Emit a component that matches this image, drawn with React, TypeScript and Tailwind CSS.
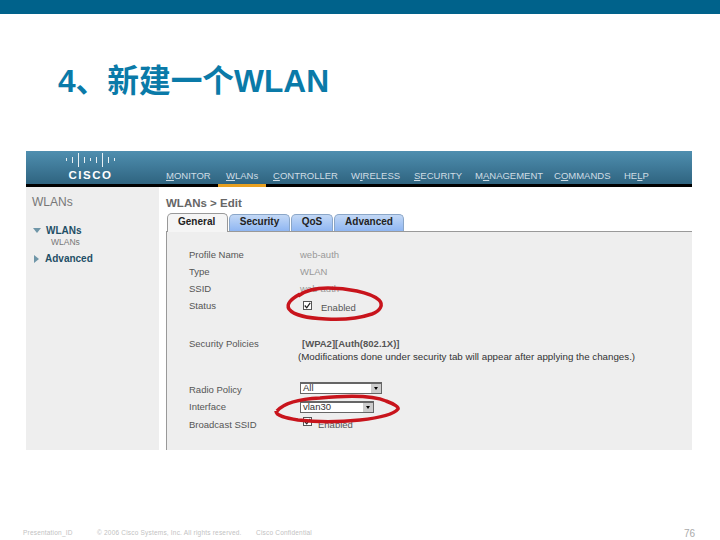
const navItems = [
  { pre: "", key: "M", post: "ONITOR", width: "w-[60px]" },
  { pre: "", key: "W", post: "LANs", width: "w-[47px]" },
  { pre: "", key: "C", post: "ONTROLLER", width: "w-[78px]" },
  { pre: "W", key: "I", post: "RELESS", width: "w-[63px]" },
  { pre: "", key: "S", post: "ECURITY", width: "w-[61px]" },
  { pre: "M", key: "A", post: "NAGEMENT", width: "w-[79px]" },
  { pre: "C", key: "O", post: "MMANDS", width: "w-[70px]" },
  { pre: "HE", key: "L", post: "P", width: "w-[30px]" },
];

function Row({ label, top, children }: { label: string; top: string; children?: React.ReactNode }) {
  return (
    <div className={`flex h-[17px] items-center ${top}`}>
      <span className="w-[111px] shrink-0 text-[9.5px] text-[#555]">{label}</span>
      {children}
    </div>
  );
}

function Check({ className }: { className?: string }) {
  return (
    <span className={`flex h-[9px] w-[9px] items-center justify-center border border-[#555] bg-white ${className ?? ""}`}>
      <svg viewBox="0 0 9 9" className="h-[7px] w-[7px]">
        <path d="M1 4.5 3.5 7.5 8 1" fill="none" stroke="#222" strokeWidth="1.6" />
      </svg>
    </span>
  );
}

function Select({ value, className }: { value: string; className: string }) {
  return (
    <span className={`flex h-[12px] items-center justify-between border border-t-2 border-[#666] bg-white pl-[2px] ${className}`}>
      <span className="text-[9.5px] leading-none text-[#333]">{value}</span>
      <span className="flex h-[9px] w-[10px] items-center justify-center bg-[#ccc]">
        <span className="h-0 w-0 border-x-[2px] border-t-[3px] border-x-transparent border-t-black" />
      </span>
    </span>
  );
}

function CiscoLogo() {
  const bars = [3, 6, 14, 6, 3, 6, 14, 6, 3];
  return (
    <div className="flex flex-col items-center">
      <div className="flex h-[15px] items-center gap-[5px]">
        {bars.map((h, i) => (
          <span key={i} className="w-px bg-[#e8f0f4]" style={{ height: h }} />
        ))}
      </div>
      <span className="mt-[2px] text-[11.5px] leading-[12px] font-bold tracking-[1.5px] text-white">CISCO</span>
    </div>
  );
}

export default function App() {
  return (
    <div className="relative h-[540px] w-[720px] overflow-hidden bg-white font-['Liberation_Sans','Noto_Sans_CJK_SC',sans-serif]">
      <div className="h-[14px] bg-[#00628b]" />

      <h1 className="mt-[47px] ml-[58px] h-[40px] text-[31.7px] leading-[40px] font-bold text-[#0a7aa8]">4、新建一个WLAN</h1>

      <div className="mt-[50px] ml-[26px] w-[666px]">
        <div className="flex h-[33px] bg-gradient-to-b from-[#4f8fb0] to-[#2f6480]">
          <div className="flex w-[140px] pt-[1px] pl-[40px]">
            <CiscoLogo />
          </div>
          <nav className="flex items-end pb-[2px]">
            {navItems.map((item) => (
              <span key={item.post} className={`${item.width} text-[9.5px] leading-[12px] whitespace-nowrap text-[#cfdde5]`}>
                {item.pre}
                <span className="underline">{item.key}</span>
                {item.post}
              </span>
            ))}
          </nav>
        </div>
        <div className="h-[3px] bg-black pl-[192px]">
          <div className="h-[3px] w-[48px] bg-[#e8a020]" />
        </div>

        <div className="flex h-[263px]">
          <aside className="w-[133px] bg-[#eeeeee] pt-[7px] pl-[6px]">
            <div className="text-[12px] leading-[16px] text-[#777]">WLANs</div>
            <div className="mt-[15px] flex items-center gap-[5px] pl-[1px]">
              <span className="h-0 w-0 border-x-[4px] border-t-[5px] border-x-transparent border-t-[#6f96a8]" />
              <span className="text-[10px] leading-[11px] font-bold text-[#1f4f66]">WLANs</span>
            </div>
            <div className="pl-[19px] text-[8.5px] leading-[12px] text-[#777]">WLANs</div>
            <div className="mt-[5px] flex items-center gap-[6px] pl-[2px]">
              <span className="h-0 w-0 border-y-[4px] border-l-[5px] border-y-transparent border-l-[#6f96a8]" />
              <span className="text-[10px] leading-[12px] font-bold text-[#1f4f66]">Advanced</span>
            </div>
          </aside>

          <main className="flex-1 pt-[8px] pl-[7px]">
            <div className="text-[11.5px] leading-[16px] font-bold text-[#666]">WLANs &gt; Edit</div>
            <div className="mt-[2px] ml-[1px] flex h-[18px] items-end gap-px">
              <div className="relative z-10 -mb-px h-[19px] w-[61px] rounded-t-[5px] border border-b-0 border-[#999] bg-[#f5f5f5] pl-[10px] text-[10px] leading-[15px] font-bold text-[#222]">General</div>
              <div className="h-[17px] w-[61px] rounded-t-[5px] border border-b-0 border-[#8aa6c8] bg-gradient-to-b from-[#c3d8f5] to-[#8fb6f2] text-center text-[10px] leading-[14px] font-bold text-[#222]">Security</div>
              <div className="h-[17px] w-[42px] rounded-t-[5px] border border-b-0 border-[#8aa6c8] bg-gradient-to-b from-[#c3d8f5] to-[#8fb6f2] text-center text-[10px] leading-[14px] font-bold text-[#222]">QoS</div>
              <div className="h-[17px] w-[70px] rounded-t-[5px] border border-b-0 border-[#8aa6c8] bg-gradient-to-b from-[#c3d8f5] to-[#8fb6f2] text-center text-[10px] leading-[14px] font-bold text-[#222]">Advanced</div>
            </div>
            <section className="h-[219px] border-t border-l border-[#999] bg-[#eeeeee] pt-[15px] pl-[22px]">
              <Row label="Profile Name" top=""><span className="text-[9.5px] text-[#999]">web-auth</span></Row>
              <Row label="Type" top=""><span className="text-[9.5px] text-[#999]">WLAN</span></Row>
              <Row label="SSID" top=""><span className="text-[9.5px] text-[#999]">web-auth</span></Row>
              <Row label="Status" top="">
                <Check className="mt-[-3px] ml-[3px]" />
                <span className="mt-[4px] ml-[9px] text-[9.5px] text-[#555]">Enabled</span>
              </Row>
              <Row label="Security Policies" top="mt-[21px]">
                <span className="ml-[2px] text-[9.5px] font-bold text-[#555]">[WPA2][Auth(802.1X)]</span>
              </Row>
              <div className="mt-[-2px] pl-[109px] text-[9.75px] leading-[12px] whitespace-nowrap text-[#333]">
                (Modifications done under security tab will appear after applying the changes.)
              </div>
              <Row label="Radio Policy" top="mt-[19px]"><Select value="All" className="mt-[-6px] w-[82px]" /></Row>
              <Row label="Interface" top=""><Select value="vlan30" className="mt-[-2px] w-[74px]" /></Row>
              <Row label="Broadcast SSID" top="mt-[1px]">
                <Check className="mt-[-8px] ml-[3px]" />
                <span className="ml-[6px] text-[9.5px] text-[#555]">Enabled</span>
              </Row>
            </section>
          </main>
        </div>
      </div>

      <footer className="mt-[78px] flex h-[10px] items-center text-[6.5px] tracking-[0.2px] text-[#c2c2c2]">
        <span className="ml-[23px] w-[74px]">Presentation_ID</span>
        <span className="w-[159px]">© 2006 Cisco Systems, Inc. All rights reserved.</span>
        <span>Cisco Confidential</span>
        <span className="mr-[25px] ml-auto text-[10px] tracking-normal text-[#aaa]">76</span>
      </footer>

      {/* red hand drawn circles over the screenshot */}
      <svg className="absolute top-0 left-0 h-[540px] w-[720px]" viewBox="0 0 720 540" fill="none" stroke="#c8141c" strokeWidth="3.5">
        <path d="M298 296C306 290 316 288 328 288 346 288 370 292 379 300 384 305 380 311 372 314 360 318 342 320 326 319 308 318 294 316 289 309 286 304 291 299 300 294" />
        <path d="M277 411C284 403 298 399 320 398 342 396 372 395 386 401 394 404 399 407 398 409 394 414 378 418 360 420 340 422 316 422 298 420 286 418 276 416 276 411" />
      </svg>
    </div>
  );
}
